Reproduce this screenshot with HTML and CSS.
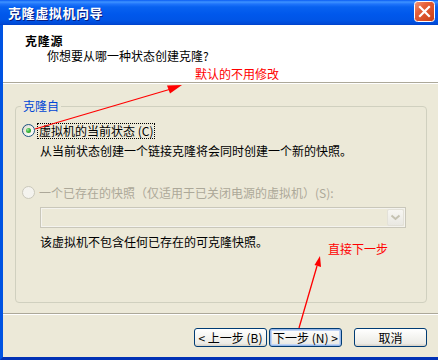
FILE: index.html
```html
<!DOCTYPE html>
<html lang="zh-CN">
<head>
<meta charset="utf-8">
<title>克隆虚拟机向导</title>
<link rel="stylesheet" href="styles.css">
</head>
<body>
<div class="window">
  <div class="titlebar">
    <span class="title">克隆虚拟机向导</span>
    <span class="close" aria-label="关闭">
      <svg width="21" height="21" viewBox="0 0 21 21">
        <defs>
          <linearGradient id="cg" x1="0" y1="0" x2="1" y2="1">
            <stop offset="0" stop-color="#F39A7E"/>
            <stop offset="0.35" stop-color="#E5603A"/>
            <stop offset="1" stop-color="#C83E14"/>
          </linearGradient>
        </defs>
        <rect x="0.5" y="0.5" width="20" height="20" rx="3" fill="url(#cg)" stroke="#FFFFFF"/>
        <path d="M6 6 L15 15 M15 6 L6 15" stroke="#FFFFFF" stroke-width="2.2" stroke-linecap="square"/>
      </svg>
    </span>
  </div>
  <div class="frame">
    <div class="header">
      <div class="h-title">克隆源</div>
      <div class="h-sub">你想要从哪一种状态创建克隆?</div>
    </div>
    <div class="content">
      <fieldset class="group">
        <legend>克隆自</legend>
        <div class="option">
          <span class="radio checked"></span>
          <span class="label focus">虚拟机的当前状态 (C)</span>
        </div>
        <p class="desc first">从当前状态创建一个链接克隆将会同时创建一个新的快照。</p>
        <div class="option disabled">
          <span class="radio"></span>
          <span class="label">一个已存在的快照（仅适用于已关闭电源的虚拟机）(S):</span>
        </div>
        <div class="select">
          <span class="select-btn">
            <svg width="11" height="7" viewBox="0 0 11 7"><path d="M1.5 1.5 L5.5 5 L9.5 1.5" fill="none" stroke="#C5C2B2" stroke-width="2"/></svg>
          </span>
        </div>
        <p class="desc last">该虚拟机不包含任何已存在的可克隆快照。</p>
      </fieldset>
    </div>
    <div class="footer">
      <button class="btn">&lt; 上一步 (B)</button>
      <button class="btn default">下一步 (N) &gt;</button>
      <button class="btn cancel">取消</button>
    </div>
  </div>
  <div class="note note-top">默认的不用修改</div>
  <div class="note note-next">直接下一步</div>
  <svg class="arrows" width="438" height="360" viewBox="0 0 438 360">
    <path d="M35 129 L171 89" stroke="#FF0000" stroke-width="1.3" fill="none"/>
    <polygon points="182,85 167,85.5 170,93.5" fill="#FF0000"/>
    <path d="M299 328 L317 266" stroke="#FF0000" stroke-width="1.3" fill="none"/>
    <polygon points="320,256 314.5,265 321,267" fill="#FF0000"/>
  </svg>
</div>
</body>
</html>
```

FILE: styles.css
```css
* { box-sizing: border-box; }

html, body {
  margin: 0;
  padding: 0;
  background: #ECE9D8;
}

body {
  font-family: "Noto Sans CJK SC", "Liberation Sans", sans-serif;
  font-size: 12px;
  color: #000;
}

.window {
  position: relative;
  width: 438px;
  height: 360px;
  display: flex;
  flex-direction: column;
  overflow: hidden;
}

.titlebar {
  height: 25px;
  flex: none;
  display: flex;
  align-items: flex-start;
  justify-content: space-between;
  padding: 0 3px 0 8px;
  background: linear-gradient(#0A5CF3 0, #3E93FF 2px, #1F74FB 4px, #0862F0 7px, #0058EC 14px, #0055E6 20px, #0049D6 24px, #003FC6 25px);
}

.title {
  color: #fff;
  font-weight: bold;
  font-size: 13px;
  line-height: 15px;
  letter-spacing: 0.6px;
  margin-top: 5px;
  text-shadow: 1px 1px 0 #0A1E80;
}

.close {
  display: block;
  width: 21px;
  height: 21px;
  margin-top: 1px;
}
.close svg { display: block; }

.frame {
  flex: 1;
  display: flex;
  flex-direction: column;
  border-left: 3px solid #0053E2;
  border-bottom: 3px solid #0131B5;
}

.header {
  height: 58px;
  flex: none;
  background: #fff;
  border-bottom: 1px solid #ACA899;
  padding: 9px 0 0 22px;
}

.h-title {
  font-weight: bold;
  line-height: 14px;
  letter-spacing: 0.8px;
}

.h-sub {
  line-height: 14px;
  margin-top: 1px;
  padding-left: 22px;
}

.content {
  height: 231px;
  flex: none;
  border-top: 1px solid #fff;
  border-bottom: 1px solid #ACA899;
  padding-top: 15px;
}

.group {
  margin: 0 11px 0 12px;
  padding: 0 0 0 6px;
  height: 204px;
  border: 1px solid #D0D0BF;
  border-radius: 4px;
}

.group legend {
  color: #0046D5;
  line-height: 14px;
  padding: 0 2px;
  margin-left: -1px;
}

.option {
  display: flex;
  align-items: flex-start;
  height: 16px;
  margin-top: 10px;
}

.radio {
  width: 13px;
  height: 13px;
  margin-top: 1px;
  border-radius: 50%;
  border: 1px solid #1C5180;
  background: linear-gradient(135deg, #DCD9CB 0%, #F3F2EC 55%, #FFFFFF 100%);
  flex: none;
  display: flex;
  align-items: center;
  justify-content: center;
}

.radio.checked::after {
  content: "";
  width: 5px;
  height: 5px;
  border-radius: 50%;
  background: radial-gradient(circle at 35% 35%, #9CEB9C 0, #3EB53E 45%, #1A8E1A 100%);
}

.label {
  margin-left: 2px;
  line-height: 14px;
  padding: 0 1px;
  border: 1px dotted transparent;
  white-space: nowrap;
}

.label.focus {
  border-color: #000;
}

.option.disabled {
  margin-top: 26px;
}

.option.disabled .radio {
  border-color: #CAC8BB;
  background: #F4F3EE;
}

.option.disabled .label {
  color: #ACA899;
}

.desc {
  margin: 4px 0 0 18px;
  line-height: 16px;
}

.desc.last {
  margin-top: 6px;
}

.select {
  margin: 6px 0 0 18px;
  width: 366px;
  height: 21px;
  border: 1px solid #C9C7BA;
  background: #ECE9D8;
  box-shadow: inset 0 0 0 1px #F4F3EE;
  display: flex;
  justify-content: flex-end;
  align-items: stretch;
  padding: 1px;
}

.select-btn {
  width: 17px;
  display: flex;
  align-items: center;
  justify-content: center;
  border: 1px solid #E3E1D8;
  border-radius: 2px;
  background: linear-gradient(#F7F6F2, #E9E8E2);
}

.footer {
  flex: 1;
  border-top: 1px solid #fff;
  display: flex;
  justify-content: flex-end;
  align-items: flex-start;
  padding: 13px 11px 0 0;
  gap: 2px;
}

.btn {
  width: 73px;
  height: 19px;
  padding: 0;
  font-family: "Noto Sans CJK SC", "Liberation Sans", sans-serif;
  font-size: 12px;
  line-height: 15px;
  color: #000;
  border: 1px solid #003C74;
  border-radius: 3px;
  background: linear-gradient(#FFFFFF 0%, #F6F6F3 40%, #ECEBE6 85%, #D6D0C5 100%);
}

.btn.default {
  box-shadow: inset 0 0 0 1px #98B8EA, inset 0 0 0 2px #C2D6F5;
}

.btn.cancel {
  margin-left: 10px;
}

.note {
  position: absolute;
  color: #FF0000;
  line-height: 14px;
  white-space: nowrap;
}

.note-top {
  left: 195px;
  top: 67px;
}

.note-next {
  left: 328px;
  top: 242px;
}

.arrows {
  position: absolute;
  left: 0;
  top: 0;
  pointer-events: none;
}
```
